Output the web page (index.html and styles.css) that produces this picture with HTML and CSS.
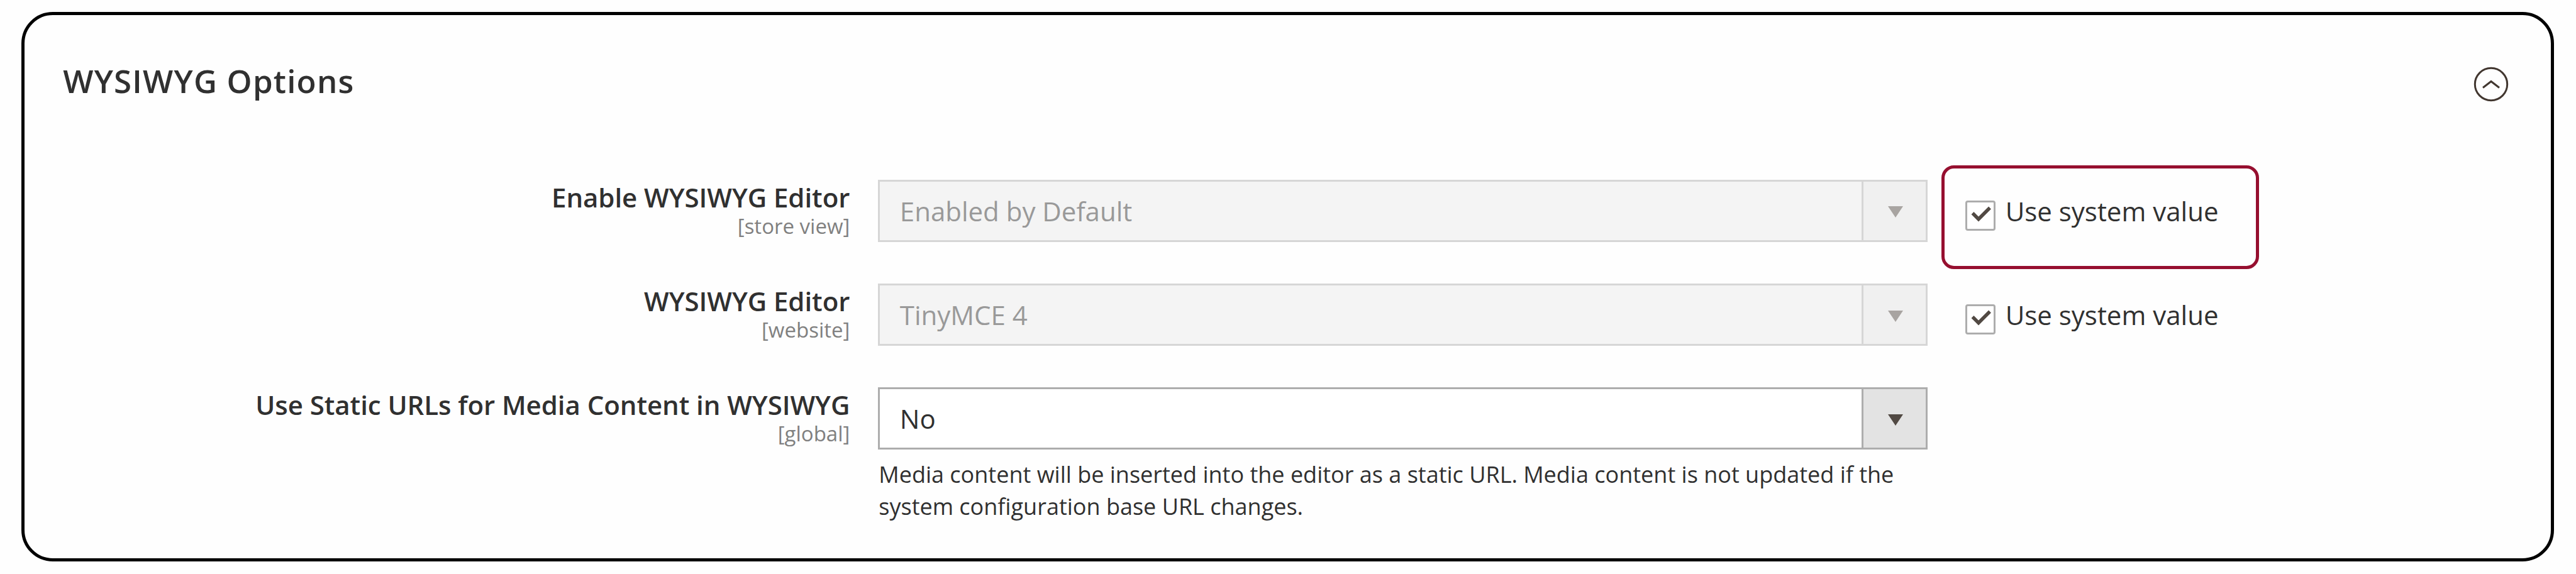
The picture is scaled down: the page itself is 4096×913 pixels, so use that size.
FILE: index.html
```html
<!DOCTYPE html>
<html lang="en">
<head>
    <meta charset="UTF-8">
    <meta name="viewport" content="width=device-width, initial-scale=1.0">
    <title>WYSIWYG Options</title>
    <link rel="stylesheet" href="styles.css">
</head>
<body>
    <div class="section">
        <div class="section-head">
            <h2 class="title">WYSIWYG Options</h2>
            <svg class="collapse" viewBox="0 0 58 58">
                <circle cx="29" cy="29" r="25.7"/>
                <path d="M16 34.5 L29 24.5 L42 34.5"/>
            </svg>
        </div>

        <div class="row">
            <div class="label">
                <span class="name">Enable WYSIWYG Editor</span>
                <span class="scope">[store view]</span>
            </div>
            <div class="value">
                <div class="select disabled">
                    <span class="text">Enabled by Default</span>
                    <span class="arrow"><svg viewBox="0 0 24 18"><path d="M0 0H24L12 18Z"/></svg></span>
                </div>
            </div>
            <div class="use-default">
                <span class="checkbox"><svg viewBox="0 0 42 42"><path d="M8.5 17 L18 26.5 L36 8.5"/></svg></span>
                <span class="check-text">Use system value</span>
                <div class="highlight"></div>
            </div>
        </div>

        <div class="row">
            <div class="label">
                <span class="name">WYSIWYG Editor</span>
                <span class="scope">[website]</span>
            </div>
            <div class="value">
                <div class="select disabled">
                    <span class="text">TinyMCE 4</span>
                    <span class="arrow"><svg viewBox="0 0 24 18"><path d="M0 0H24L12 18Z"/></svg></span>
                </div>
            </div>
            <div class="use-default">
                <span class="checkbox"><svg viewBox="0 0 42 42"><path d="M8.5 17 L18 26.5 L36 8.5"/></svg></span>
                <span class="check-text">Use system value</span>
            </div>
        </div>

        <div class="row">
            <div class="label">
                <span class="name">Use Static URLs for Media Content in WYSIWYG</span>
                <span class="scope">[global]</span>
            </div>
            <div class="value">
                <div class="select">
                    <span class="text">No</span>
                    <span class="arrow"><svg viewBox="0 0 24 18"><path d="M0 0H24L12 18Z"/></svg></span>
                </div>
                <p class="note">Media content will be inserted into the editor as a static URL. Media content is not updated if the<br>system configuration base URL changes.</p>
            </div>
        </div>
    </div>
</body>
</html>
```

FILE: styles.css
```css
* {
    box-sizing: border-box;
}

body {
    margin: 0;
    padding: 18.6px 35.5px 0 34.3px;
    height: 913px;
    overflow: hidden;
    background: #fefefe;
    color: #303030;
    font-family: "Open Sans", "Noto Sans", sans-serif;
    font-size: 42px;
}

.section {
    height: 874.6px;
    border: 5px solid #000;
    border-radius: 50px;
}

.section-head {
    display: flex;
    justify-content: space-between;
    align-items: center;
    height: 220px;
    padding: 0 66px 0 61px;
    margin-bottom: 42.4px;
}

.title {
    margin: 0;
    padding-bottom: 11px;
    font-size: 51px;
    font-weight: 600;
    line-height: 70px;
    letter-spacing: 1.2px;
}

.collapse {
    width: 58px;
    height: 58px;
    fill: none;
    stroke: #41362f;
    stroke-width: 3;
}

.row {
    display: flex;
    align-items: flex-start;
    height: 165.2px;
}

.label {
    display: flex;
    flex-direction: column;
    align-items: flex-end;
    width: 1312px;
    white-space: nowrap;
}

.name {
    font-weight: 600;
    line-height: 56px;
    letter-spacing: -0.06px;
}

.scope {
    color: #808080;
    font-size: 33px;
    line-height: 35px;
}

.value {
    width: 1669.3px;
    margin-left: 44.5px;
}

.select {
    display: flex;
    height: 99px;
    border: 3px solid #adadad;
    background: #fff;
}

.select .text {
    flex: 1;
    padding-left: 32px;
    line-height: 94px;
}

.arrow {
    display: flex;
    align-items: center;
    justify-content: center;
    width: 102px;
    padding-left: 3px;
    border-left: 3px solid #adadad;
    background: #e3e3e3;
}

.arrow svg {
    width: 24px;
    height: 18px;
    margin-top: 4px;
    fill: #514943;
}

.disabled {
    border-color: #d6d6d6;
    background: #f4f4f4;
    color: #999;
}

.disabled .arrow {
    border-color: #d6d6d6;
    background: #f0f0f0;
}

.disabled .arrow svg {
    fill: #a8a4a1;
}

.note {
    margin: 14px 0 0 0;
    padding-left: 1.5px;
    font-size: 36px;
    line-height: 51px;
    white-space: nowrap;
}

.use-default {
    position: relative;
    display: flex;
    align-items: flex-start;
    padding-left: 59.6px;
    white-space: nowrap;
}

.checkbox {
    width: 48px;
    height: 48px;
    margin-top: 33px;
    border: 3px solid #adadad;
    border-radius: 4px;
    background: #fff;
}

.checkbox svg {
    display: block;
    width: 42px;
    height: 42px;
    fill: none;
    stroke: #514943;
    stroke-width: 5.5;
}

.check-text {
    margin-left: 16px;
    line-height: 57px;
    padding-top: 21px;
}

/* red frame around the first checkbox */
.highlight {
    position: absolute;
    top: -22.7px;
    left: 22px;
    width: 504.5px;
    height: 164.4px;
    border: 5px solid #960f2f;
    border-radius: 20px;
}
```
